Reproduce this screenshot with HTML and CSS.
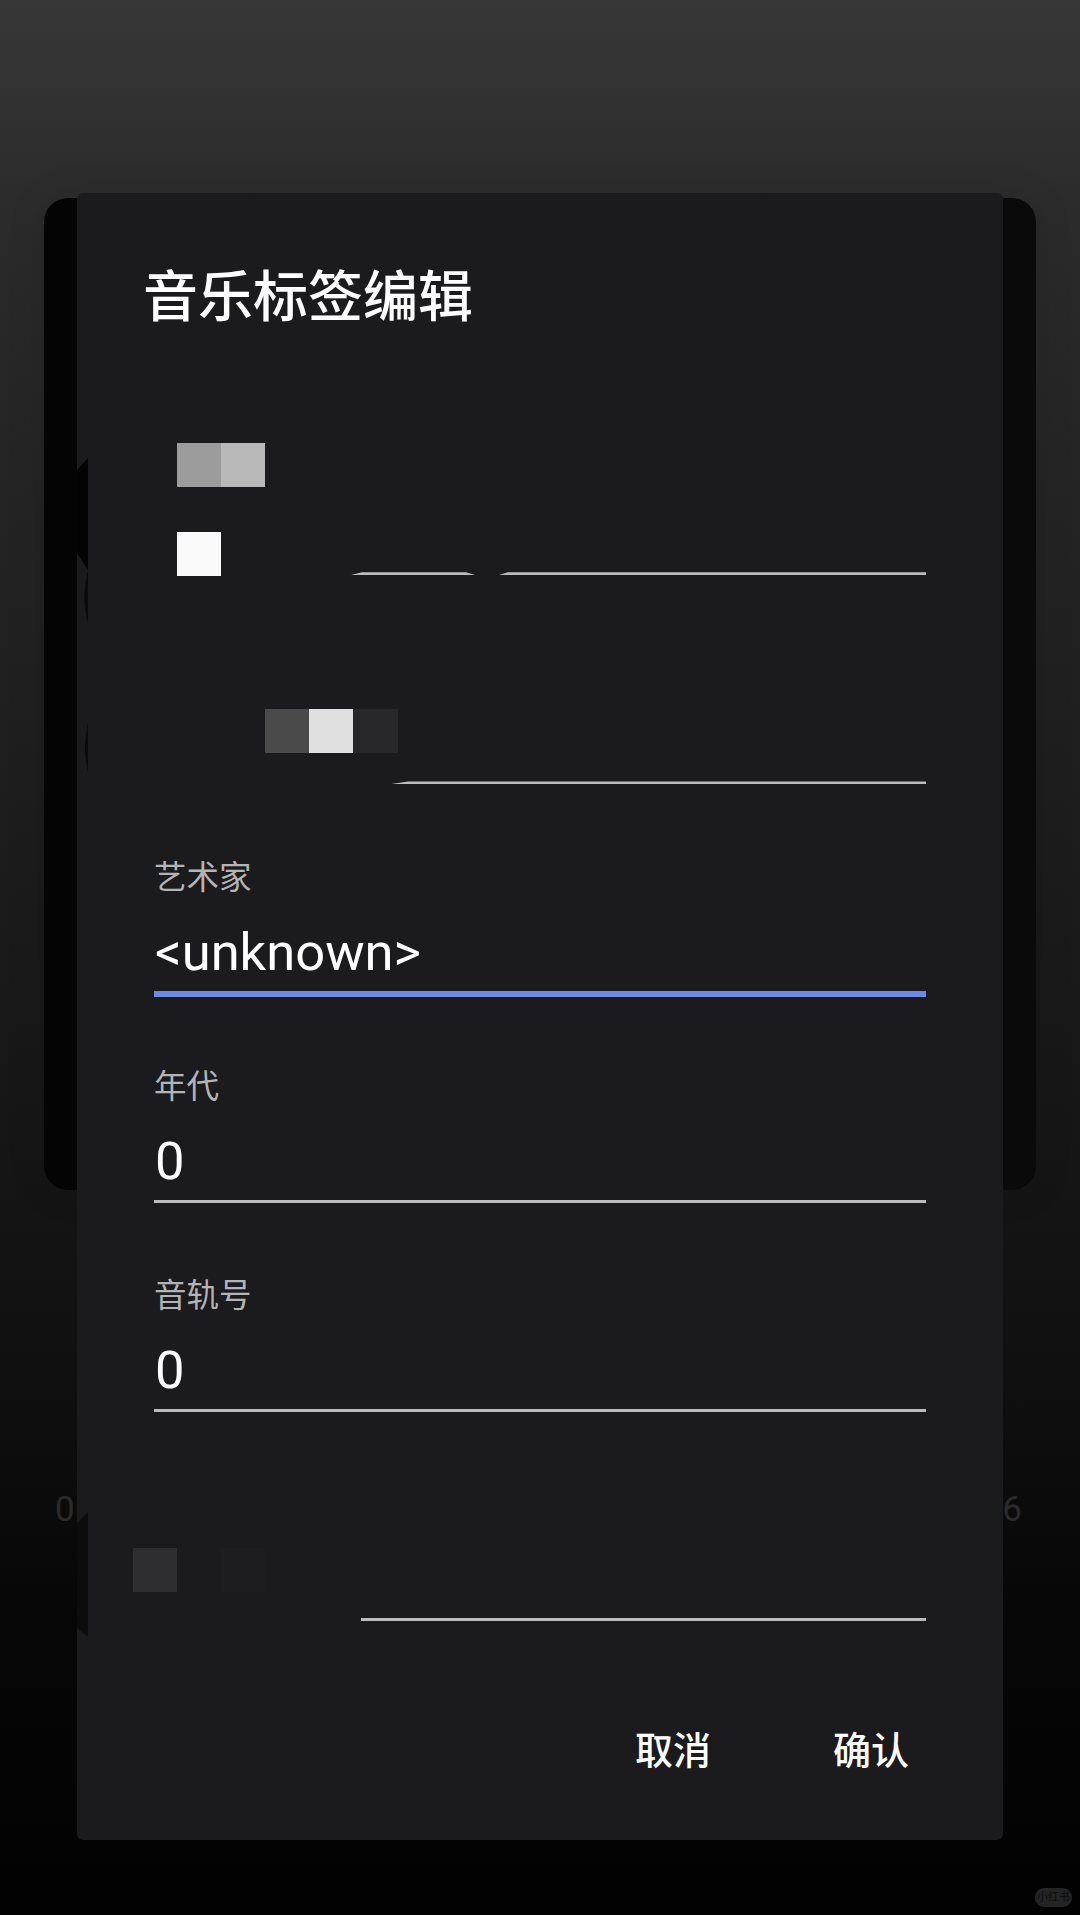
FILE: index.html
```html
<!DOCTYPE html>
<html lang="zh-CN">

<head>
    <meta charset="UTF-8">
    <meta name="viewport" content="width=device-width, initial-scale=1.0">
    <title>音乐标签编辑</title>
    <link rel="stylesheet" href="styles.css">
</head>

<body>
    <!-- Player behind the dialog -->
    <div class="player">
        <div class="cover"></div>
        <div class="times">
            <span>0:00</span>
            <span>3:26</span>
        </div>
    </div>

    <div class="dialog">
        <h1 class="dialog-title">音乐标签编辑</h1>

        <!-- Title and album, text hidden by the mosaic -->
        <div class="field">
            <div class="field-line line-title"></div>
        </div>
        <div class="field">
            <div class="field-line line-album"></div>
        </div>

        <div class="field">
            <label class="field-label">艺术家</label>
            <div class="field-value">&lt;unknown&gt;</div>
            <div class="field-line focused"></div>
        </div>
        <div class="field">
            <label class="field-label">年代</label>
            <div class="field-value">0</div>
            <div class="field-line"></div>
        </div>
        <div class="field">
            <label class="field-label">音轨号</label>
            <div class="field-value">0</div>
            <div class="field-line"></div>
        </div>
        <div class="field">
            <div class="field-line line-last"></div>
        </div>

        <div class="dialog-actions">
            <button class="action-btn">取消</button>
            <button class="action-btn">确认</button>
        </div>

        <!-- Mosaic blocks over the hidden text -->
        <div class="mosaic mosaic-a"><i class="m1"></i><i class="m2"></i></div>
        <div class="mosaic mosaic-b"><i class="m3"></i></div>
        <div class="mosaic mosaic-c"><i class="m4"></i><i class="m5"></i><i class="m6"></i></div>
        <div class="mosaic mosaic-d"><i class="m7"></i><i></i><i class="m8"></i></div>

        <svg class="edge-marks" width="14" height="1647" viewBox="0 0 14 1647">
            <polygon points="0,277 11,265 11,377 0,360" fill="#030303" />
            <path d="M11,377 C6,400 6,410 11,430 Z" fill="#0a0a0b" />
            <path d="M11,530 C7,550 7,560 11,579 Z" fill="#0a0a0b" />
            <polygon points="0,1330 11,1319 11,1444 0,1435" fill="#0c0c0c" />
        </svg>
    </div>

    <div class="watermark">小红书</div>
</body>

</html>
```

FILE: styles.css
```css
* {
    box-sizing: border-box;
}

body {
    position: relative;
    width: 1080px;
    height: 1915px;
    margin: 0;
    overflow: hidden;
    font-family: Roboto, "Noto Sans CJK SC", sans-serif;
    background: linear-gradient(180deg, #373737 0%, #2a2a2a 12%, #1c1c1c 45%, #111 70%, #060606 85%, #020202 100%);
}

.player {
    padding: 198px 44px 0 44px;
}

.cover {
    height: 992px;
    border-radius: 24px;
    background: linear-gradient(90deg, #040404 0%, #0a0a0a 100%);
    box-shadow: 0 0 40px rgba(0, 0, 0, 0.1);
}

.times {
    display: flex;
    justify-content: space-between;
    margin-top: 298px;
    padding: 0 14px 0 11px;
    font-size: 35px;
    line-height: 44px;
    color: #2b2b2b;
}

.dialog {
    position: absolute;
    left: 77px;
    top: 193px;
    width: 926px;
    height: 1647px;
    padding: 0 77px;
    border-radius: 6px;
    background-color: #1b1a1d;
}

.dialog-title {
    height: 173px;
    margin: 0 0 0 -11px;
    padding-top: 67px;
    font-size: 55px;
    line-height: 74px;
    font-weight: 500;
    color: #fff;
}

.field {
    display: flex;
    flex-direction: column;
    justify-content: flex-end;
    height: 209.2px;
}

.field-label {
    font-size: 32.5px;
    line-height: 40px;
    color: #b4b4b4;
}

.field-value {
    height: 70px;
    margin: 19px 0 4px;
    padding-left: 1px;
    font-size: 52.5px;
    line-height: 70px;
    color: #fff;
}

.field-line {
    height: 3px;
    background-color: #bdbcbd;
}

.field-line.focused {
    height: 6px;
    margin-bottom: -3px;
    background-color: #6c8ae4;
}

.line-title {
    margin-left: 196px;
    clip-path: polygon(0 100%, 12px 0, 116px 0, 126px 100%, 148px 100%, 158px 0, 100% 0, 100% 100%);
}

.line-album {
    margin-left: 234px;
    clip-path: polygon(0 100%, 20px 0, 100% 0, 100% 100%);
}

.line-last {
    margin-left: 207px;
}

.dialog-actions {
    display: flex;
    justify-content: flex-end;
    gap: 122px;
    margin-top: 105px;
    padding-right: 17px;
}

.action-btn {
    padding: 0;
    border: none;
    background: none;
    font-family: inherit;
    font-size: 38px;
    line-height: 50px;
    font-weight: 500;
    color: #fff;
}

.mosaic {
    position: absolute;
    display: flex;
    height: 44.3px;
}

.mosaic i {
    width: 44.2px;
    height: 100%;
}

.mosaic-a { left: 99.5px; top: 250px; }
.mosaic-b { left: 99.5px; top: 339px; }
.mosaic-c { left: 188px; top: 515.7px; }
.mosaic-d { left: 55.5px; top: 1355px; }

.m1 { background-color: #9c9c9c; }
.m2 { background-color: #b9b9b9; }
.m3 { background-color: #fafafa; }
.m4 { background-color: #4a4a4a; }
.m5 { background-color: #e0e0e0; }
.m6 { background-color: #28272a; }
.m7 { background-color: #2e2d30; }
.m8 { background-color: #1d1c1f; }

.edge-marks {
    position: absolute;
    left: 0;
    top: 0;
}

.watermark {
    position: absolute;
    left: 1035px;
    top: 1888px;
    width: 37px;
    height: 19px;
    border-radius: 9px;
    background-color: #242424;
    font-size: 11px;
    line-height: 19px;
    text-align: center;
    color: #0c0c0c;
}
```
